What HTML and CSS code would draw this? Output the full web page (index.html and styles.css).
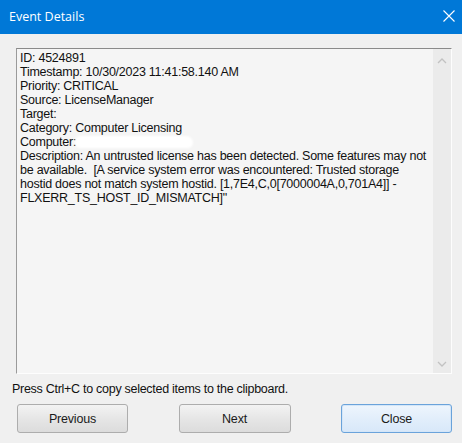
FILE: index.html
```
<!DOCTYPE html>
<html>
<head>
<meta charset="utf-8">
<link rel="stylesheet" href="styles.css">
</head>
<body>
<div class="window">
  <div class="titlebar">
    <span class="title">Event Details</span>
    <svg class="close-x" width="12" height="12" viewBox="0 0 12 12"><path d="M0.5 0.5 L11.5 11.5 M11.5 0.5 L0.5 11.5" stroke="#fff" stroke-width="1.1" fill="none"/></svg>
  </div>
  <div class="main">
    <div class="textbox">
      <div class="text">
        <div>ID: 4524891</div>
        <div>Timestamp: 10/30/2023 11:41:58.140 AM</div>
        <div>Priority: CRITICAL</div>
        <div>Source: LicenseManager</div>
        <div>Target:</div>
        <div>Category: Computer Licensing</div>
        <div class="computer">Computer: <span class="redact"></span></div>
        <div>Description: An untrusted license has been detected. Some features may not</div>
        <div>be available.&nbsp; [A service system error was encountered: Trusted storage</div>
        <div>hostid does not match system hostid. [1,7E4,C,0[7000004A,0,701A4]] -</div>
        <div>FLXERR_TS_HOST_ID_MISMATCH]"</div>
      </div>
      <div class="scrollbar">
        <svg width="10" height="6" viewBox="0 0 10 6"><path d="M1 5 L5 1 L9 5" stroke="#c2c2c2" stroke-width="1.3" fill="none"/></svg>
        <svg width="10" height="6" viewBox="0 0 10 6"><path d="M1 1 L5 5 L9 1" stroke="#c2c2c2" stroke-width="1.3" fill="none"/></svg>
      </div>
    </div>
    <div class="hint">Press Ctrl+C to copy selected items to the clipboard.</div>
    <div class="buttons">
      <button class="btn prev">Previous</button>
      <button class="btn next">Next</button>
      <button class="btn close default">Close</button>
    </div>
  </div>
</div>
</body>
</html>
```
FILE: styles.css
```
html, body {
  margin: 0;
  padding: 0;
}
body {
  width: 462px;
  height: 443px;
  overflow: hidden;
  background: #f0f0f0;
}
.window {
  width: 462px;
  height: 443px;
  background: #f0f0f0;
  font-family: "Liberation Sans", Arial, sans-serif;
}
.titlebar {
  height: 34px;
  background: #0078d7;
  display: flex;
  align-items: center;
  justify-content: space-between;
  padding: 0 7px 0 9px;
  box-sizing: border-box;
}
.title {
  color: #fff;
  font-family: "Open Sans", "Noto Sans", sans-serif;
  font-size: 12.5px;
  margin-top: -1px;
}
.close-x {
  margin-top: -2px;
}
.main {
  padding: 14px 10px 0 12px;
}
.textbox {
  margin-left: 4px;
  width: 436px;
  height: 326px;
  box-sizing: border-box;
  border-top: 1px solid #8a8a8a;
  border-left: 1px solid #9a9a9a;
  border-right: 1px solid #fdfdfd;
  border-bottom: 1px solid #fdfdfd;
  background: #f5f5f5;
  display: flex;
}
.text {
  flex: 1;
  padding: 2px 0 0 3px;
  font-size: 12.5px;
  letter-spacing: -0.25px;
  line-height: 14px;
  color: #111;
  white-space: nowrap;
  overflow: hidden;
}
.computer {
  position: relative;
}
.redact {
  position: absolute;
  left: 55px;
  top: 1px;
  width: 118px;
  height: 12px;
  background: #fff;
  border-radius: 6px 8px 6px 6px;
  filter: blur(1.2px);
}
.scrollbar {
  width: 18px;
  background: #ebebeb;
  display: flex;
  flex-direction: column;
  align-items: center;
  justify-content: space-between;
  padding: 9px 0 6px;
  box-sizing: border-box;
}
.hint {
  margin-top: 8px;
  font-size: 12.5px;
  letter-spacing: -0.28px;
  line-height: 14px;
  color: #111;
}
.buttons {
  margin: 8px 0 0 5px;
  width: 435px;
  display: flex;
  justify-content: space-between;
}
.btn {
  height: 29px;
  width: 111px;
  border: 1px solid #adadad;
  border-radius: 3px;
  background: linear-gradient(#f3f3f3, #e6e6e6 50%, #dcdcdc);
  font-family: "Liberation Sans", Arial, sans-serif;
  font-size: 12.5px;
  letter-spacing: -0.2px;
  color: #1a1a1a;
  padding: 0;
}
.btn.next {
  width: 112px;
}
.btn.default {
  border-color: #6aa3db;
  background: linear-gradient(#eef5fd, #e2eefb 50%, #d8e8f9);
  box-shadow: inset 0 0 0 1px #d4e6f8;
}
```
